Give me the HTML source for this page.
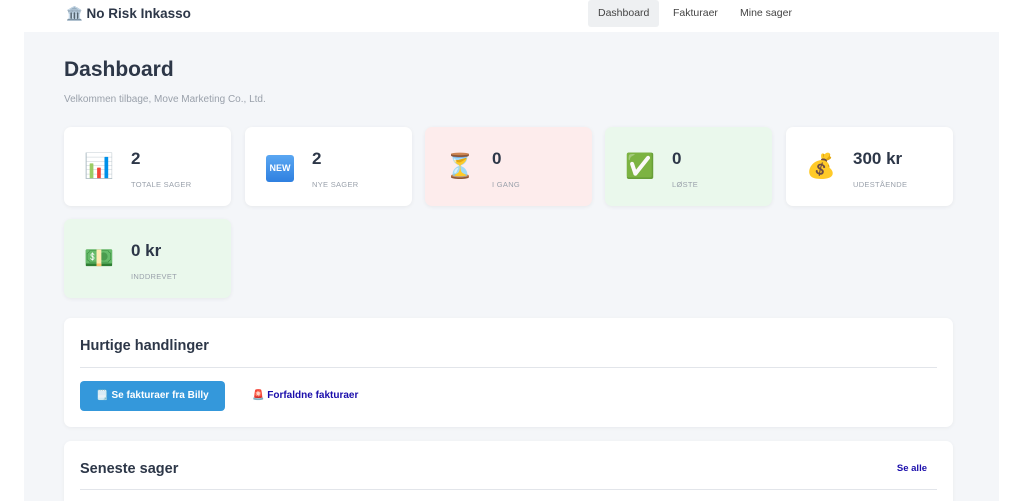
<!DOCTYPE html>
<html><head><meta charset="utf-8"><style>
*{box-sizing:border-box;margin:0;padding:0}
html,body{width:1024px;height:501px;overflow:hidden}
body{background:#fff;font-family:"Liberation Sans","Noto Sans CJK SC",sans-serif;color:#2d3748;position:relative}
.nav{position:absolute;top:0;left:0;width:1024px;height:32px}
.logo{position:absolute;left:66px;top:6px;font-weight:bold;font-size:13.5px;color:#2d3748}
.nl{position:absolute;top:0;height:27px;line-height:27px;font-size:10.5px;color:#444;padding:0 10px}
.main{position:absolute;left:24px;top:32px;width:975px;height:469px;background:#f4f6f9}
h1{position:absolute;left:64px;top:58px;font-size:21px;color:#2d3748}
.sub{position:absolute;left:64px;top:94px;font-size:10px;color:#9aa1ab}
.card{position:absolute;width:167px;height:79px;border-radius:7px;background:#fff;box-shadow:0 1px 4px rgba(0,0,0,.06)}
.card .ic{position:absolute;left:20px;top:26px;width:28px;height:28px;font-size:24px;line-height:28px;text-align:center}
.card .v{position:absolute;left:67px;top:22px;font-size:17px;font-weight:bold;color:#2d3748}
.card .l{position:absolute;left:67px;top:53px;font-size:7.5px;color:#9aa1ab;letter-spacing:.3px}
.box{position:absolute;left:64px;width:889px;background:#fff;border-radius:7px;box-shadow:0 1px 4px rgba(0,0,0,.05)}
.box h2{position:absolute;left:16px;top:20px;font-size:14.5px;color:#2d3748}
.box .hr{position:absolute;left:16px;right:16px;height:1px;background:#e2e5ea}
.new{position:absolute;left:21px;top:28px;width:28px;height:27px;border-radius:3px;background:linear-gradient(#5aa7f2,#2f80e0);color:#fff;font-size:9px;font-weight:bold;line-height:27px;text-align:center}
</style></head><body>
<div class="nav">
<div class="logo">🏛️ No Risk Inkasso</div>
<div class="nl" style="left:588px;background:#eef0f2;border-radius:3px">Dashboard</div>
<div class="nl" style="left:663px">Fakturaer</div>
<div class="nl" style="left:730px">Mine sager</div>
</div>
<div class="main"></div>
<h1>Dashboard</h1>
<div class="sub">Velkommen tilbage, Move Marketing Co., Ltd.</div>
<div class="card" style="left:64px;top:127px"><div class="ic">📊</div><div class="v">2</div><div class="l">TOTALE SAGER</div></div>
<div class="card" style="left:245px;top:127px"><div class="new">NEW</div><div class="v">2</div><div class="l">NYE SAGER</div></div>
<div class="card" style="left:425px;top:127px;background:#fdecec"><div class="ic">⏳</div><div class="v">0</div><div class="l">I GANG</div></div>
<div class="card" style="left:605px;top:127px;background:#eaf8ec"><div class="ic">✅</div><div class="v">0</div><div class="l">LØSTE</div></div>
<div class="card" style="left:786px;top:127px"><div class="ic">💰</div><div class="v">300 kr</div><div class="l">UDESTÅENDE</div></div>
<div class="card" style="left:64px;top:219px;background:#eaf8ec"><div class="ic">💵</div><div class="v">0 kr</div><div class="l">INDDREVET</div></div>
<div class="box" style="top:318px;height:109px"><h2>Hurtige handlinger</h2><div class="hr" style="top:49px"></div>
<div style="position:absolute;left:16px;top:63px;width:145px;height:30px;background:#3498db;border-radius:4px;color:#fff;font-size:10px;font-weight:bold;line-height:30px;text-align:center">🗒️ Se fakturaer fra Billy</div>
<div style="position:absolute;left:188px;top:72px;color:#1a0dab;font-size:10px;font-weight:bold">🚨 Forfaldne fakturaer</div>
</div>
<div class="box" style="top:441px;height:60px;border-radius:7px 7px 0 0"><h2>Seneste sager</h2><div class="hr" style="top:48px"></div>
<div style="position:absolute;right:26px;top:22px;color:#1a0dab;font-size:9.5px;font-weight:bold">Se alle</div></div>
</body></html>
